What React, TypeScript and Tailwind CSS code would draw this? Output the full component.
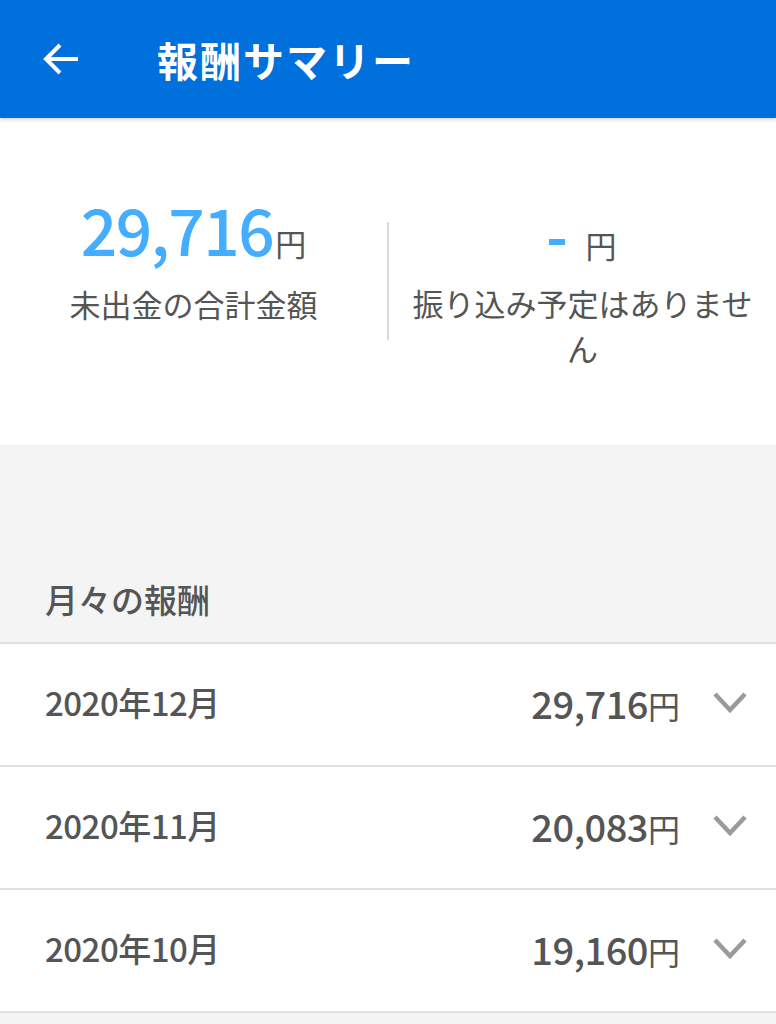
import React from 'react'

const FONT = '"Noto Sans CJK JP", "Noto Sans", sans-serif'

const months = [
  { label: '2020年12月', amount: '29,716' },
  { label: '2020年11月', amount: '20,083' },
  { label: '2020年10月', amount: '19,160' },
]

const Chevron = () => (
  <svg width="36" height="26" viewBox="0 0 36 26" fill="none">
    <path d="M3 4 L18 20 L33 4" stroke="#9a9a9a" strokeWidth="4.5" strokeLinecap="butt" strokeLinejoin="miter" />
  </svg>
)

const App: React.FC = () => {
  return (
    <div className="w-[776px] h-[1024px] bg-[#f4f4f4] overflow-hidden" style={{ fontFamily: FONT }}>
      {/* header */}
      <div className="h-[118px] bg-[#0070dc] flex items-center shadow-[0_2px_3px_rgba(0,0,0,0.15)] relative z-10">
        <svg className="ml-[41px]" width="40" height="36" viewBox="0 0 40 36" fill="none">
          <path d="M37 18 H5 M19 4 L5 18 L19 32" stroke="white" strokeWidth="4" />
        </svg>
        <h1 className="ml-[76px] text-white text-[41px] font-bold tracking-[2px] leading-none">報酬サマリー</h1>
      </div>

      {/* summary */}
      <div className="bg-white h-[327px] flex items-start pt-[78px]">
        <div className="w-[387px] flex flex-col items-center">
          <div className="flex items-baseline leading-none text-[#45adff]">
            <span className="text-[64px] font-medium tracking-[-1.5px]">29,716</span>
            <span className="text-[31px] text-[#555] ml-[2px]">円</span>
          </div>
          <div className="mt-[22px] text-[31px] text-[#555] leading-[44px]">未出金の合計金額</div>
        </div>
        <div className="w-[2px] h-[118px] bg-[#d9d9d9] mt-[26px]" />
        <div className="flex-1 px-[20px] flex flex-col items-center">
          <div className="flex items-center h-[76px] pt-[20px]">
            <span className="w-[16px] h-[6px] bg-[#45adff] mb-[4px]" />
            <span className="ml-[21px] text-[31px] text-[#555] leading-none">円</span>
          </div>
          <div className="mt-[8px] text-[31px] text-[#555] leading-[45px] text-center">振り込み予定はありません</div>
        </div>
      </div>

      {/* monthly */}
      <div className="h-[197px] flex items-end px-[45px] pb-[26px]">
        <h2 className="text-[33px] font-medium text-[#555] leading-none">月々の報酬</h2>
      </div>
      <div className="border-t-2 border-[#e0e0e0]">
        {months.map(m => (
          <div key={m.label} className="h-[123px] bg-white border-b-2 border-[#e0e0e0] flex items-center pl-[45px] pr-[28px] pb-[4px]">
            <span className="text-[33px] font-medium text-[#555] tracking-[-0.5px]">{m.label}</span>
            <div className="ml-auto flex items-baseline text-[#555]">
              <span className="text-[38px] font-medium tracking-[-0.5px]">{m.amount}</span>
              <span className="text-[32px]">円</span>
            </div>
            <div className="ml-[32px] flex items-center">
              <Chevron />
            </div>
          </div>
        ))}
      </div>
    </div>
  )
}

export default App
